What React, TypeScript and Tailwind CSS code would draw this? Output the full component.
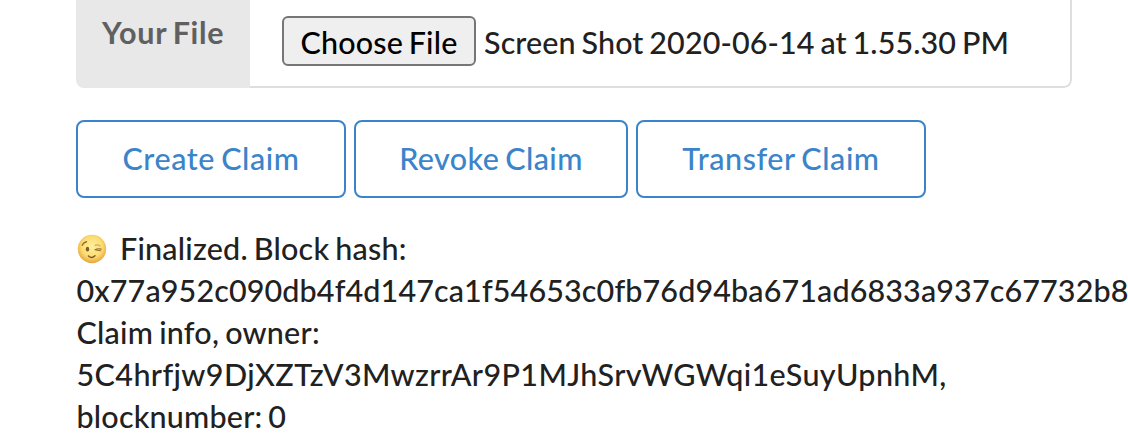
function Wink() {
  return (
    <svg className="ml-[0.5px] mr-[13px] mt-px h-[30px] w-[30px]" viewBox="0 0 30 30" fill="none" strokeLinecap="round">
      <defs>
        <radialGradient id="face" cx="50%" cy="42%" r="56%">
          <stop offset="0" stopColor="#fff0a0" />
          <stop offset=".65" stopColor="#fbdc70" />
          <stop offset="1" stopColor="#e9a945" />
        </radialGradient>
      </defs>
      <circle cx="15" cy="15" r="14.2" fill="url(#face)" />
      <ellipse cx="10.5" cy="15.2" rx="1.7" ry="2.4" fill="#805a28" />
      <path d="M5.2 11.2Q6.6 8.3 9.5 7.8" stroke="#94692f" strokeWidth="1.4" />
      <path d="M18 11.2Q20.8 10 23.2 11.8" stroke="#c99a4c" strokeWidth="1" />
      <path d="M18 15.7Q21 14.2 24.2 15.1M19.2 16L23.5 16.7" stroke="#94692f" strokeWidth="1.1" />
      <path d="M11.5 22Q14.7 25 18 21.8" stroke="#805a28" strokeWidth="1.5" />
    </svg>
  );
}

export default function App() {
  const button = "h-[78px] shrink-0 rounded-[8px] border-2 border-[#3b84ca] bg-white text-center text-[30.5px] leading-[72px] pb-[2px] text-[#3b84ca] [word-spacing:-2px]";
  return (
    <main className="h-[442px] w-[1128px] overflow-hidden bg-white pl-[76px] font-['Lato',sans-serif] text-[30.5px] font-medium text-[#212121] [font-variant-ligatures:none] [word-spacing:-2px]">
      <div className="flex h-[88px] w-[996px] overflow-hidden rounded-b-[8px]">
        <div className="w-[174px] whitespace-nowrap bg-[#e8e8e8] pl-[26px] pt-[11px] font-bold leading-[42px] tracking-[0.7px] text-[#606060]">Your File</div>
        <div className="flex flex-1 rounded-br-[8px] border-b-2 border-r-2 border-[#dededf] pl-[32px] pt-[16px]">
          <button className="h-[50px] w-[194px] shrink-0 rounded-[6px] border-2 border-[#767676] bg-[#efefef] pt-[2px] leading-[44px] tracking-[0.15px] text-black [word-spacing:-2px]">Choose File</button>
          <span className="ml-[8px] whitespace-nowrap leading-[52px] tracking-[0.11px]">Screen Shot 2020-06-14 at 1.55.30 PM</span>
        </div>
      </div>
      <div className="mt-[32px] flex gap-[8px]">
        <button className={`${button} w-[270px] tracking-[0.55px]`}>Create Claim</button>
        <button className={`${button} w-[274px] tracking-[0.38px]`}>Revoke Claim</button>
        <button className={`${button} w-[290px] tracking-[0.56px]`}>Transfer Claim</button>
      </div>
      <div className="mt-[29px] whitespace-nowrap pl-[0.5px] leading-[42px]">
        <div className="flex items-center tracking-[0.22px]"><Wink />Finalized. Block hash:</div>
        <div className="tracking-[0.12px]">0x77a952c090db4f4d147ca1f54653c0fb76d94ba671ad6833a937c67732b8</div>
        <div className="tracking-[0.24px]">Claim info, owner:</div>
        <div className="tracking-[0.39px]">5C4hrfjw9DjXZTzV3MwzrrAr9P1MJhSrvWGWqi1eSuyUpnhM,</div>
        <div className="tracking-[0.2px]">blocknumber: 0</div>
      </div>
    </main>
  );
}
